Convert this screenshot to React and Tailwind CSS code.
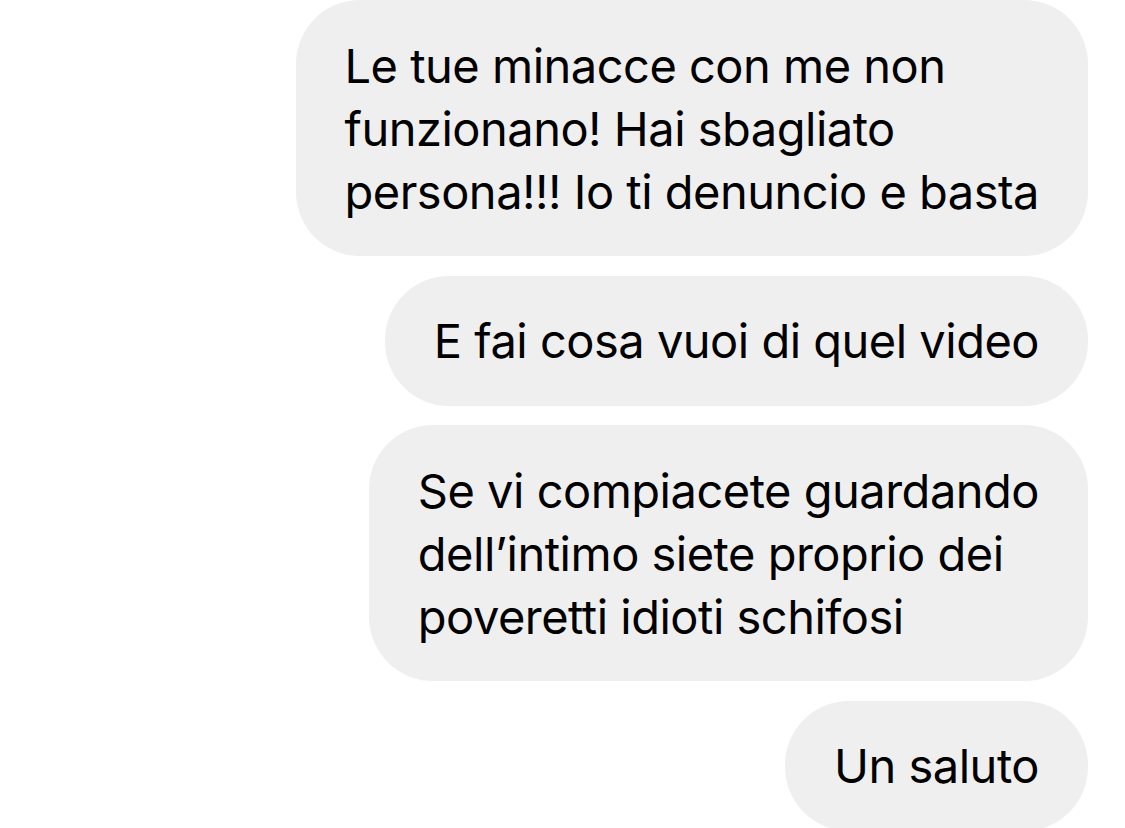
import React from 'react';

const messages = [
  ['Le tue minacce con me non', 'funzionano! Hai sbagliato', 'persona!!! Io ti denuncio e basta'],
  ['E fai cosa vuoi di quel video'],
  ['Se vi compiacete guardando', 'dell\u2019intimo siete proprio dei', 'poveretti idioti schifosi'],
  ['Un saluto'],
];

const Bubble = ({ lines }) => (
  <div className="bg-[#efefef] rounded-[64px] px-[49px] py-[33.5px] text-[47px] leading-[63px] tracking-[-0.5px] text-black whitespace-nowrap">
    {lines.map((l, i) => (
      <div key={i}>{l}</div>
    ))}
  </div>
);

export default function App() {
  return (
    <div className="w-[1125px] h-[828px] overflow-hidden bg-white font-['Inter',sans-serif]">
      <div className="flex flex-col items-end gap-[19.5px] pr-[37px]">
        {messages.map((m, i) => (
          <Bubble key={i} lines={m} />
        ))}
      </div>
    </div>
  );
}
